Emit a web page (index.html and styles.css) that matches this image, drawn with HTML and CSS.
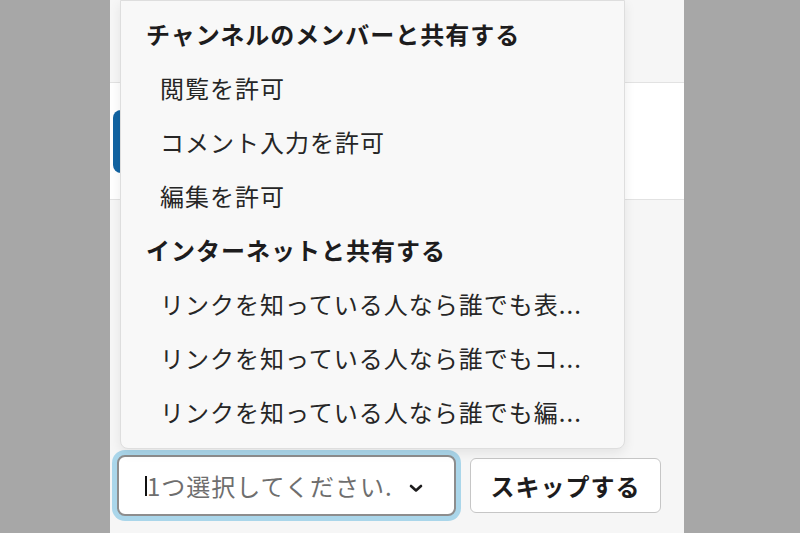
FILE: index.html
```html
<!DOCTYPE html>
<html lang="ja">
<head>
<meta charset="UTF-8">
<meta name="viewport" content="width=device-width, initial-scale=1.0">
<title>共有設定</title>
<link rel="stylesheet" href="styles.css">
</head>
<body>
<div class="sheet">
    <div class="sheet-head"></div>
    <div class="sheet-body">
        <span class="pill"></span>
    </div>
    <div class="sheet-foot">
        <div class="select">
            <span class="caret"></span>
            <span class="placeholder">1つ選択してください.</span>
            <svg class="chevron" width="14" height="9" viewBox="0 0 14 9">
                <path d="M2 2 L7 6.5 L12 2" />
            </svg>
        </div>
        <button class="btn">スキップする</button>
    </div>

    <!-- 開いているドロップダウン -->
    <ul class="menu">
        <li class="menu-title">チャンネルのメンバーと共有する</li>
        <li class="menu-item">閲覧を許可</li>
        <li class="menu-item">コメント入力を許可</li>
        <li class="menu-item">編集を許可</li>
        <li class="menu-title">インターネットと共有する</li>
        <li class="menu-item">リンクを知っている人なら誰でも表...</li>
        <li class="menu-item">リンクを知っている人なら誰でもコ...</li>
        <li class="menu-item">リンクを知っている人なら誰でも編...</li>
    </ul>
</div>
</body>
</html>
```

FILE: styles.css
```css
body {
    margin: 0;
    background: #a7a7a7;
    font-family: "Noto Sans CJK JP", "Noto Sans", sans-serif;
    color: #1d1c1d;
}
ul {
    margin: 0;
    padding: 0;
    list-style: none;
}
.sheet {
    position: relative;
    margin-left: 110px;
    width: 574px;
    height: 533px;
    background: #f6f6f6;
    overflow: hidden;
}
.sheet-head {
    height: 82px;
    border-bottom: 1px solid #e2e2e2;
}
.sheet-body {
    height: 117px;
    padding: 27px 0 0 3px;
    box-sizing: border-box;
    background: #fff;
    border-bottom: 1px solid #e2e2e2;
}
.pill {
    display: block;
    width: 60px;
    height: 63px;
    border-radius: 8px;
    background: #1264a3;
}
.sheet-foot {
    display: flex;
    align-items: center;
    gap: 14px;
    padding: 255px 0 0 7px;
}
.select {
    display: flex;
    align-items: center;
    width: 339px;
    height: 61px;
    box-sizing: border-box;
    padding: 0 31px 0 26px;
    background: #fff;
    border: 2px solid #8d8d8d;
    border-radius: 8px;
    box-shadow: 0 0 0 5px #aad6ea;
}
.caret {
    width: 2px;
    height: 20px;
    background: #111;
}
.placeholder {
    font-size: 24px;
    letter-spacing: 1px;
    color: #6e6e6e;
    white-space: nowrap;
}
.chevron {
    margin-left: auto;
    margin-top: 5px;
}
.chevron path {
    fill: none;
    stroke: #1d1c1d;
    stroke-width: 2.6;
    stroke-linecap: round;
    stroke-linejoin: round;
}
.btn {
    width: 191px;
    height: 55px;
    padding: 0;
    background: #fff;
    border: 1px solid #c6c6c6;
    border-radius: 6px;
    font: 700 24px/1 "Noto Sans CJK JP", sans-serif;
    letter-spacing: 1px;
    color: #1d1c1d;
}
.menu {
    position: absolute;
    left: 10px;
    top: 0;
    width: 505px;
    height: 449px;
    box-sizing: border-box;
    padding-top: 6px;
    background: #f8f8f8;
    border: 1px solid #dedede;
    border-radius: 0 0 8px 8px;
    box-shadow: 0 4px 12px rgba(0, 0, 0, .08);
}
.menu li {
    height: 54px;
    font-size: 24px;
    line-height: 54px;
    letter-spacing: 1px;
    white-space: nowrap;
}
.menu-title {
    padding-left: 25px;
    font-weight: 700;
}
.menu-item {
    padding-left: 39px;
    color: #262626;
}
```
